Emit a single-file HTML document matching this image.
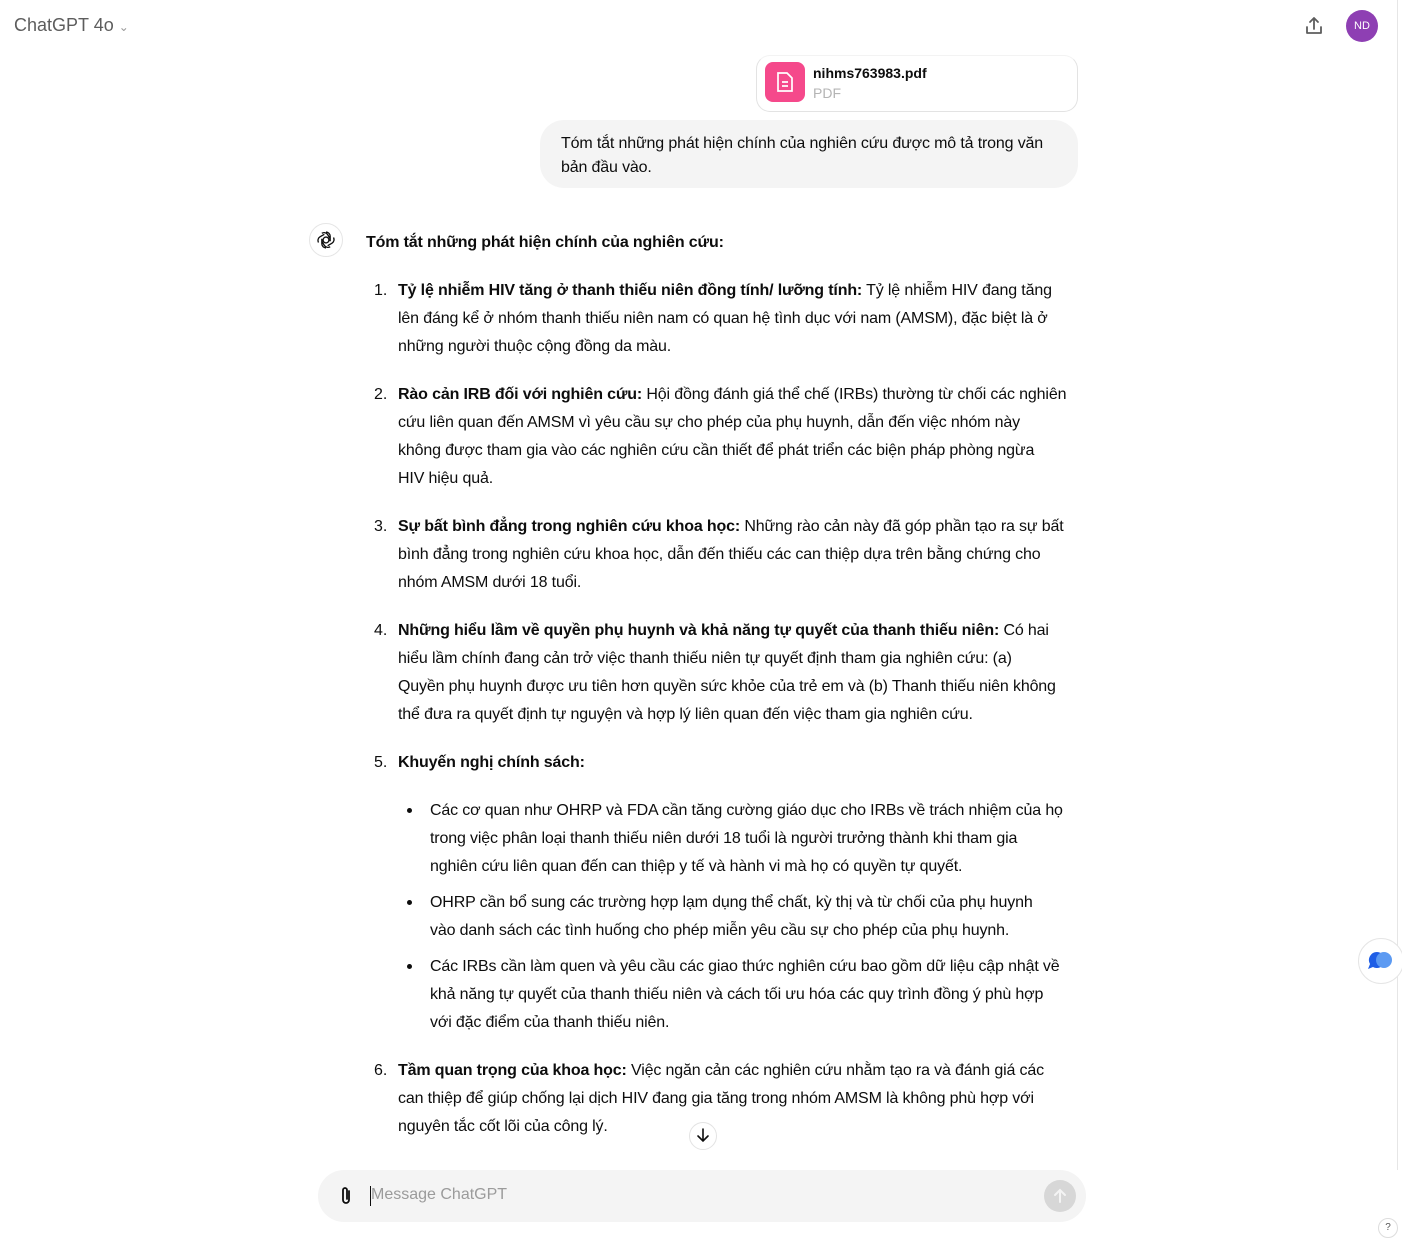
<!DOCTYPE html>
<html><head><meta charset="utf-8">
<style>
*{margin:0;padding:0;box-sizing:border-box}
body{width:1402px;height:1231px;background:#fff;font-family:"Liberation Sans",Arial,sans-serif;color:#0d0d0d;position:relative;overflow:hidden}
.a{position:absolute;white-space:nowrap}
.t{font-size:16px;line-height:28px;letter-spacing:-0.15px}
b{font-weight:bold}
.num{position:absolute;font-size:16px;line-height:28px}
.dot{position:absolute;width:5px;height:5px;border-radius:50%;background:#0d0d0d}
.c{position:absolute;left:0;top:2px;width:1402px;height:1231px}
</style></head><body>
<div class="a" style="left:14px;top:15px;font-size:18px;color:#5d5d5d;font-weight:500">ChatGPT 4o <span style="font-size:12px;color:#9a9a9a">&#8964;</span></div>
<svg class="a" style="left:1303px;top:15px" width="22" height="22" viewBox="0 0 22 22" fill="none" stroke="#5d5d5d" stroke-width="1.8" stroke-linecap="round" stroke-linejoin="round"><path d="M11 14V3M7 7l4-4 4 4M4 12v6h14v-6"/></svg>
<div class="a" style="left:1346px;top:10px;width:32px;height:32px;border-radius:50%;background:#8e3fb3;color:#fff;font-size:11px;text-align:center;line-height:32px">ND</div>
<div style="position:absolute;left:1397px;top:0;width:1px;height:1170px;background:#e6e6e6"></div>

<div class="a" style="left:756px;top:55px;width:322px;height:57px;border:1px solid #e3e3e3;border-radius:14px;border-top-color:#f3f3f3"></div>
<div class="a" style="left:765px;top:62px;width:40px;height:40px;border-radius:8px;background:#f5498b"></div>
<svg class="a" style="left:775px;top:71px" width="20" height="22" viewBox="0 0 20 22" fill="none" stroke="#fff" stroke-width="1.7"><path d="M3 2h9l5 5v13H3z"/><path d="M7 11h6M7 15h6"/></svg>
<div class="a" style="left:813px;top:65px;font-size:14px;font-weight:bold;color:#0d0d0d">nihms763983.pdf</div>
<div class="a" style="left:813px;top:85px;font-size:14px;color:#b4b4b4">PDF</div>

<div class="a" style="left:540px;top:120px;width:538px;height:68px;background:#f4f4f4;border-radius:24px"></div>
<div class="a t" style="left:561px;top:132px;line-height:24px">Tóm tắt những phát hiện chính của nghiên cứu được mô tả trong văn<br>bản đầu vào.</div>

<div class="a" style="left:309px;top:223px;width:34px;height:34px;border-radius:50%;border:1px solid #e5e5e5"></div>
<svg class="a" style="left:316px;top:230px" width="20" height="20" viewBox="0 0 24 24" fill="none" stroke="#0d0d0d" stroke-width="1.6"><circle cx="12" cy="12" r="3.5"/><path d="M12 2.5a5 5 0 0 1 5 5v6M21 9a5 5 0 0 1-1.8 6.8l-5.2 3M17 20a5 5 0 0 1-7-1.5L7 13.5M12 21.5a5 5 0 0 1-5-5v-6M3 15a5 5 0 0 1 1.8-6.8l5.2-3M7 4a5 5 0 0 1 7 1.5L17 10.5"/></svg>

<div class="c">
<div class="a t" style="left:366px;top:227px"><b>Tóm tắt những phát hiện chính của nghiên cứu:</b></div>

<div class="num" style="left:374px;top:275px">1.</div>
<div class="a t" style="left:398px;top:275px"><b>Tỷ lệ nhiễm HIV tăng ở thanh thiếu niên đồng tính/ lưỡng tính:</b> Tỷ lệ nhiễm HIV đang tăng<br>lên đáng kể ở nhóm thanh thiếu niên nam có quan hệ tình dục với nam (AMSM), đặc biệt là ở<br>những người thuộc cộng đồng da màu.</div>

<div class="num" style="left:374px;top:379px">2.</div>
<div class="a t" style="left:398px;top:379px"><b>Rào cản IRB đối với nghiên cứu:</b> Hội đồng đánh giá thể chế (IRBs) thường từ chối các nghiên<br>cứu liên quan đến AMSM vì yêu cầu sự cho phép của phụ huynh, dẫn đến việc nhóm này<br>không được tham gia vào các nghiên cứu cần thiết để phát triển các biện pháp phòng ngừa<br>HIV hiệu quả.</div>

<div class="num" style="left:374px;top:511px">3.</div>
<div class="a t" style="left:398px;top:511px"><b>Sự bất bình đẳng trong nghiên cứu khoa học:</b> Những rào cản này đã góp phần tạo ra sự bất<br>bình đẳng trong nghiên cứu khoa học, dẫn đến thiếu các can thiệp dựa trên bằng chứng cho<br>nhóm AMSM dưới 18 tuổi.</div>

<div class="num" style="left:374px;top:615px">4.</div>
<div class="a t" style="left:398px;top:615px"><b>Những hiểu lầm về quyền phụ huynh và khả năng tự quyết của thanh thiếu niên:</b> Có hai<br>hiểu lầm chính đang cản trở việc thanh thiếu niên tự quyết định tham gia nghiên cứu: (a)<br>Quyền phụ huynh được ưu tiên hơn quyền sức khỏe của trẻ em và (b) Thanh thiếu niên không<br>thể đưa ra quyết định tự nguyện và hợp lý liên quan đến việc tham gia nghiên cứu.</div>

<div class="num" style="left:374px;top:747px">5.</div>
<div class="a t" style="left:398px;top:747px"><b>Khuyến nghị chính sách:</b></div>

<div class="dot" style="left:407px;top:806px"></div>
<div class="a t" style="left:430px;top:795px">Các cơ quan như OHRP và FDA cần tăng cường giáo dục cho IRBs về trách nhiệm của họ<br>trong việc phân loại thanh thiếu niên dưới 18 tuổi là người trưởng thành khi tham gia<br>nghiên cứu liên quan đến can thiệp y tế và hành vi mà họ có quyền tự quyết.</div>
<div class="dot" style="left:407px;top:898px"></div>
<div class="a t" style="left:430px;top:887px">OHRP cần bổ sung các trường hợp lạm dụng thể chất, kỳ thị và từ chối của phụ huynh<br>vào danh sách các tình huống cho phép miễn yêu cầu sự cho phép của phụ huynh.</div>
<div class="dot" style="left:407px;top:962px"></div>
<div class="a t" style="left:430px;top:951px">Các IRBs cần làm quen và yêu cầu các giao thức nghiên cứu bao gồm dữ liệu cập nhật về<br>khả năng tự quyết của thanh thiếu niên và cách tối ưu hóa các quy trình đồng ý phù hợp<br>với đặc điểm của thanh thiếu niên.</div>

<div class="num" style="left:374px;top:1055px">6.</div>
<div class="a t" style="left:398px;top:1055px"><b>Tầm quan trọng của khoa học:</b> Việc ngăn cản các nghiên cứu nhằm tạo ra và đánh giá các<br>can thiệp để giúp chống lại dịch HIV đang gia tăng trong nhóm AMSM là không phù hợp với<br>nguyên tắc cốt lõi của công lý.</div>
</div>

<div class="a" style="left:689px;top:1122px;width:28px;height:28px;border-radius:50%;border:1px solid #e3e3e3;background:#fff"></div>
<svg class="a" style="left:695px;top:1127px" width="16" height="16" viewBox="0 0 16 16" fill="none" stroke="#0d0d0d" stroke-width="1.6" stroke-linecap="round"><path d="M8 2v12M3 9l5 5 5-5"/></svg>

<div class="a" style="left:318px;top:1170px;width:768px;height:52px;border-radius:26px;background:#f4f4f4"></div>
<svg class="a" style="left:337px;top:1185px" width="18" height="22" viewBox="0 0 18 22" fill="none" stroke="#0d0d0d" stroke-width="1.8" stroke-linecap="round"><path d="M12 6v9a3 3 0 0 1-6 0V5a2 2 0 0 1 4 0v9"/></svg>
<div class="a" style="left:370px;top:1186px;width:1px;height:20px;background:#0d0d0d"></div>
<div class="a" style="left:371px;top:1186px;font-size:16px;color:#9b9b9b">Message ChatGPT</div>
<div class="a" style="left:1044px;top:1180px;width:32px;height:32px;border-radius:50%;background:#d7d7d7"></div>
<svg class="a" style="left:1052px;top:1188px" width="16" height="16" viewBox="0 0 16 16" fill="none" stroke="#f4f4f4" stroke-width="2" stroke-linecap="round"><path d="M8 14V2M3 7l5-5 5 5"/></svg>

<div class="a" style="left:1358px;top:938px;width:46px;height:46px;border-radius:50%;border:1px solid #e5e5e5;background:#fff"></div>
<svg class="a" style="left:1367px;top:950px" width="28" height="22" viewBox="0 0 28 22"><path d="M10 2a8 8 0 0 0-7 12l-2 5 5-2A8 8 0 1 0 10 2z" fill="#1f5ee6"/><circle cx="17" cy="10" r="8" fill="#5c9af2"/></svg>
<div class="a" style="left:1378px;top:1218px;width:20px;height:20px;border-radius:50%;border:1px solid #ddd;font-size:10px;color:#555;text-align:center;line-height:18px">?</div>
</body></html>
